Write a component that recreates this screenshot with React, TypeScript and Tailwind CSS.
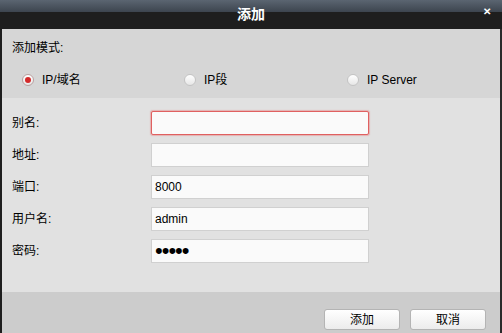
import { useState } from "react";

const FONT = { fontFamily: '"Liberation Sans", "Noto Sans CJK SC", sans-serif' };

type Field = {
  label: string;
  value: string;
  type?: string;
  focused?: boolean;
};

const FIELDS: Field[] = [
  { label: "别名:", value: "", focused: true },
  { label: "地址:", value: "" },
  { label: "端口:", value: "8000" },
  { label: "用户名:", value: "admin" },
  { label: "密码:", value: "12345", type: "password" },
];

const MODES = ["IP/域名", "IP段", "IP Server"];

function Radio({ checked }: { checked: boolean }) {
  return (
    <span
      className={
        "flex h-[12px] w-[12px] items-center justify-center rounded-full border bg-gradient-to-b from-white to-[#e6e6e6] " +
        (checked ? "border-[#b9a0a0]" : "border-[#c4c4c4]")
      }
    >
      {checked && <span className="h-[6px] w-[6px] rounded-full bg-[#d42a2a]" />}
    </span>
  );
}

export default function App() {
  const [mode, setMode] = useState(0);

  return (
    <div className="flex h-[333px] w-[502px] flex-col overflow-hidden text-[12px] text-black" style={FONT}>
      {/* Title bar */}
      <div className="relative flex h-[29px] flex-col">
        <div className="h-[12px] bg-gradient-to-b from-[#5b6571] to-[#3d454f]" />
        <div className="flex-1 bg-[#1e1e1e]" />
        <div className="absolute inset-0 flex items-center justify-center text-[14px] font-bold text-white">添加</div>
        <span className="absolute right-[11px] top-[7px] text-[10px] font-bold leading-none text-white">✕</span>
      </div>

      {/* Body with side borders */}
      <div className="flex flex-1 border-x-2 border-l-[#1e1e1e] border-r-[#2a2a2a]">
        <div className="flex flex-1 flex-col">
          {/* Mode section */}
          <div className="flex h-[69px] flex-col bg-[#d6d6d6] px-[10px] pt-[11px]">
            <div className="h-[16px] leading-[16px]">添加模式:</div>
            <div className="mt-[16px] flex items-center">
              {MODES.map((m, i) => (
                <button
                  key={m}
                  onClick={() => setMode(i)}
                  className={
                    "flex items-center gap-[8px] " +
                    (i === 0 ? "ml-[10px] w-[162px]" : i === 1 ? "w-[163px]" : "")
                  }
                >
                  <Radio checked={mode === i} />
                  <span className="text-[12px] leading-[16px]">{m}</span>
                </button>
              ))}
            </div>
          </div>

          {/* Fields */}
          <div className="flex flex-1 flex-col gap-[8px] bg-[#e1e1e1] px-[10px] pt-[13px]">
            {FIELDS.map((f) => (
              <div key={f.label} className="flex h-[24px] items-center">
                <span className="w-[139px]">{f.label}</span>
                <input
                  type={f.type ?? "text"}
                  defaultValue={f.value}
                  readOnly
                  className={
                    "h-[24px] w-[218px] border bg-[#fafafa] px-[3px] outline-none " +
                    (f.type === "password" ? "text-[22px] leading-none tracking-[-1px] " : "text-[12px] ") +
                    (f.focused
                      ? "rounded-[2px] border-[#e06060] shadow-[0_0_1px_1px_rgba(230,120,120,0.45)]"
                      : "border-[#d0d0d0]")
                  }
                  style={FONT}
                />
              </div>
            ))}
          </div>

          {/* Footer */}
          <div className="flex h-[41px] items-start justify-end gap-[10px] bg-[#cccccc] pr-[14px] pt-[17px]">
            <button className="h-[21px] w-[76px] rounded-[3px] border border-[#b4b4b4] bg-gradient-to-b from-white to-[#ececec] text-[12px]">
              添加
            </button>
            <button className="h-[21px] w-[76px] rounded-[3px] border border-[#b4b4b4] bg-gradient-to-b from-white to-[#ececec] text-[12px]">
              取消
            </button>
          </div>
        </div>
      </div>
    </div>
  );
}
